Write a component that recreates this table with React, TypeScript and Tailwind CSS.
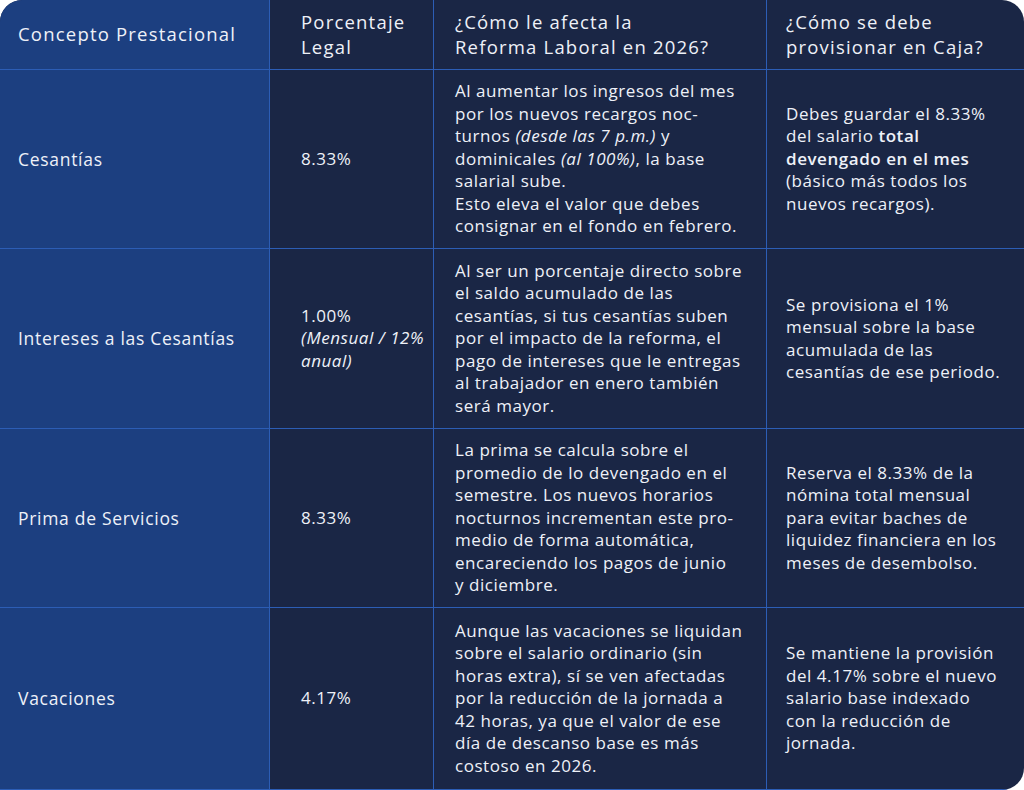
import type { ReactNode } from 'react';

type Row = {
  concept: string;
  pct: ReactNode;
  impact: ReactNode[];
  cash: ReactNode[];
  h: string;
};

const rows: Row[] = [
  {
    concept: 'Cesantías',
    pct: '8.33%',
    h: 'h-[179px]',
    impact: [
      'Al aumentar los ingresos del mes',
      'por los nuevos recargos noc-',
      <>
        turnos <em>(desde las 7 p.m.)</em> y
      </>,
      <>
        dominicales <em>(al 100%)</em>, la base
      </>,
      'salarial sube.',
      'Esto eleva el valor que debes',
      'consignar en el fondo en febrero.',
    ],
    cash: [
      'Debes guardar el 8.33%',
      <>
        del salario <strong className="font-semibold">total</strong>
      </>,
      <strong className="font-semibold">devengado en el mes</strong>,
      '(básico más todos los',
      'nuevos recargos).',
    ],
  },
  {
    concept: 'Intereses a las Cesantías',
    pct: (
      <>
        <span className="block font-medium">1.00%</span>
        <em className="block font-normal">(Mensual / 12%</em>
        <em className="block font-normal">anual)</em>
      </>
    ),
    h: 'h-[180px]',
    impact: [
      'Al ser un porcentaje directo sobre',
      'el saldo acumulado de las',
      'cesantías, si tus cesantías suben',
      'por el impacto de la reforma, el',
      'pago de intereses que le entregas',
      'al trabajador en enero también',
      'será mayor.',
    ],
    cash: [
      'Se provisiona el 1%',
      'mensual sobre la base',
      'acumulada de las',
      'cesantías de ese periodo.',
    ],
  },
  {
    concept: 'Prima de Servicios',
    pct: '8.33%',
    h: 'h-[179px]',
    impact: [
      'La prima se calcula sobre el',
      'promedio de lo devengado en el',
      'semestre. Los nuevos horarios',
      'nocturnos incrementan este pro-',
      'medio de forma automática,',
      'encareciendo los pagos de junio',
      'y diciembre.',
    ],
    cash: [
      'Reserva el 8.33% de la',
      'nómina total mensual',
      'para evitar baches de',
      'liquidez financiera en los',
      'meses de desembolso.',
    ],
  },
  {
    concept: 'Vacaciones',
    pct: '4.17%',
    h: 'h-[182px]',
    impact: [
      'Aunque las vacaciones se liquidan',
      'sobre el salario ordinario (sin',
      'horas extra), sí se ven afectadas',
      'por la reducción de la jornada a',
      '42 horas, ya que el valor de ese',
      'día de descanso base es más',
      'costoso en 2026.',
    ],
    cash: [
      'Se mantiene la provisión',
      'del 4.17% sobre el nuevo',
      'salario base indexado',
      'con la reducción de',
      'jornada.',
    ],
  },
];

function Lines({ items }: { items: ReactNode[] }) {
  return (
    <div>
      {items.map((l, i) => (
        <span key={i} className="block whitespace-nowrap">
          {l}
        </span>
      ))}
    </div>
  );
}

const cell = 'flex items-center border-b border-r border-[#2c5db5]';
const head = 'h-[70px] text-[18.5px] font-medium leading-[24.5px] tracking-[1.2px]';
const body = 'text-[17px] leading-[22.5px] tracking-[0.55px]';

export default function App() {
  return (
    <div
      className="h-[790px] w-[1024px] overflow-hidden bg-white"
      style={{ fontFamily: '"Open Sans", "Noto Sans", sans-serif' }}
    >
      <div className="grid grid-cols-[270px_164px_333px_257px] overflow-hidden rounded-tl-[22px] rounded-tr-[22px] rounded-br-[22px] bg-[#1a2645] text-[#eef1f8]">
        {/* header */}
        <div className={`${cell} ${head} bg-[#1c3f80] pl-[18px]`}>Concepto Prestacional</div>
        <div className={`${cell} ${head} pl-[31px]`}>
          <Lines items={['Porcentaje', 'Legal']} />
        </div>
        <div className={`${cell} ${head} pl-[21px]`}>
          <Lines items={['¿Cómo le afecta la', 'Reforma Laboral en 2026?']} />
        </div>
        <div className={`${cell} ${head} border-r-0 pl-[19px]`}>
          <Lines items={['¿Cómo se debe', 'provisionar en Caja?']} />
        </div>

        {rows.map((r) => (
          <div key={r.concept} className="contents">
            <div
              className={`${cell} ${r.h} bg-[#1c3f80] pl-[18px] text-[17.5px] font-medium tracking-[0.7px]`}
            >
              {r.concept}
            </div>
            <div className={`${cell} ${r.h} ${body} pl-[31px] font-medium`}>
              <div>{r.pct}</div>
            </div>
            <div className={`${cell} ${r.h} ${body} pl-[21px]`}>
              <Lines items={r.impact} />
            </div>
            <div className={`${cell} ${r.h} ${body} border-r-0 pl-[19px]`}>
              <Lines items={r.cash} />
            </div>
          </div>
        ))}
      </div>
    </div>
  );
}
